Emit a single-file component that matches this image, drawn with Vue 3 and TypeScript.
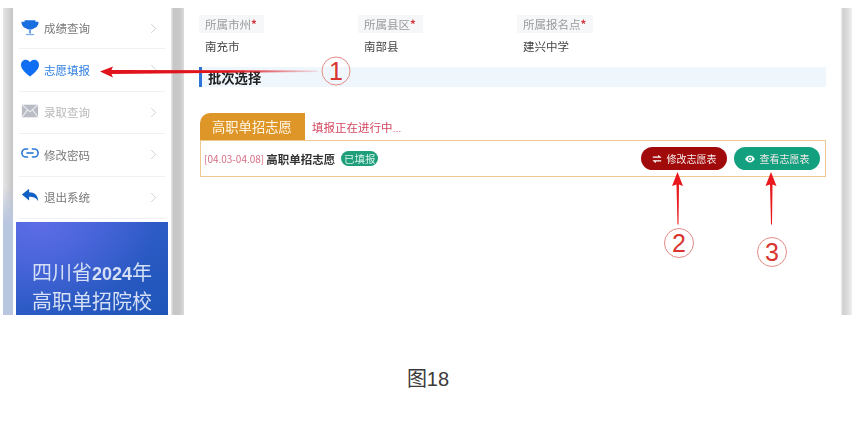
<script setup lang="ts">
interface MenuItem {
  label: string
  icon: string
  state?: string
}
const menu: MenuItem[] = [
  { label: '成绩查询', icon: 'trophy' },
  { label: '志愿填报', icon: 'heart', state: 'active' },
  { label: '录取查询', icon: 'mail', state: 'muted' },
  { label: '修改密码', icon: 'link' },
  { label: '退出系统', icon: 'reply' },
]
const fields = [
  { label: '所属市州', value: '南充市' },
  { label: '所属县区', value: '南部县' },
  { label: '所属报名点', value: '建兴中学' },
]
</script>

<template>
  <div class="page">
    <div class="shot">
      <div class="edge-left"></div>
      <aside class="sidebar">
        <ul class="menu">
          <li v-for="item in menu" :key="item.label" class="menu-item" :class="item.state">
            <svg class="menu-icon" :class="'icon-' + item.icon" viewBox="0 0 20 20" aria-hidden="true">
              <g v-if="item.icon === 'trophy'">
                <path d="M4 1.500h12v1.500h3.500c0 4-2 6.500-5 7.200-1 1-2.500 1.600-4.500 1.600s-3.500-.6-4.500-1.600C2.500 9.500.5 7 .5 3H4z" fill="#1a6fe0" />
                <path d="M9 12h2v4H9z" fill="#5a96e4" />
                <path d="M5.500 16.500h9V18h-9z" fill="#7fb0ec" />
              </g>
              <path
                v-else-if="item.icon === 'heart'"
                fill="#0f6ef2"
                d="M10 19.500C4 15 0 11 0 6.500 0 3 2.700.8 5.400.8 7.400.8 9 1.900 10 3.500 11 1.900 12.600.8 14.600.8 17.300.8 20 3 20 6.500 20 11 16 15 10 19.500z"
              />
              <g v-else-if="item.icon === 'mail'">
                <rect x="1" y="3" width="18" height="14" fill="#b9bcc4" />
                <path d="M1 3l9 8 9-8M1 17l6-8M19 17l-6-8" fill="none" stroke="#eceef1" stroke-width="1.200" />
              </g>
              <g v-else-if="item.icon === 'link'" fill="none" stroke="#2b78d8" stroke-width="1.800">
                <path d="M8 5.500H5.500a4.500 4.500 0 0 0 0 9H8" />
                <path d="M12 5.500h2.500a4.500 4.500 0 0 1 0 9H12" />
                <path d="M6 10h8" />
              </g>
              <path
                v-else
                fill="#0f5fc4"
                d="M9 3v4c6 0 10 3 10 10-2-4-5-5-10-5v4L1 9.500z"
              />
            </svg>
            <span class="menu-label">{{ item.label }}</span>
            <svg class="chevron" viewBox="0 0 8 12" aria-hidden="true">
              <path d="M1.500 1l5 5-5 5" fill="none" stroke="#c4c6ca" stroke-width="1" />
            </svg>
          </li>
        </ul>
        <div class="banner">
          <p>四川省<b>2024</b>年</p>
          <p>高职单招院校</p>
        </div>
      </aside>
      <div class="gutter"></div>
      <main class="main">
        <div class="fields">
          <div v-for="f in fields" :key="f.label" class="field">
            <div class="field-label">{{ f.label }}<i>*</i></div>
            <div class="field-value">{{ f.value }}</div>
          </div>
        </div>
        <h2 class="section-title">批次选择</h2>
        <div class="tabs">
          <span class="tab">高职单招志愿</span>
          <span class="status">填报正在进行中<em>…</em></span>
        </div>
        <div class="batch">
          <span class="date">[04.03-04.08]</span>
          <span class="name">高职单招志愿</span>
          <span class="badge">已填报</span>
          <div class="actions">
            <button class="btn btn-red" type="button">
              <svg viewBox="0 0 12 12" aria-hidden="true">
                <path d="M1 3h6.500V.8L11.500 4.600H1zM11 9H4.500v2.200L.5 7.400H11z" fill="#fff" />
              </svg>
              修改志愿表
            </button>
            <button class="btn btn-green" type="button">
              <svg viewBox="0 0 14 10" aria-hidden="true">
                <path d="M.2 5C2 1.800 4.500.2 7 .2S12 1.800 13.800 5C12 8.200 9.500 9.800 7 9.800S2 8.200.2 5z" fill="#fff" />
                <circle cx="7" cy="5" r="2.800" fill="#12a07e" />
                <circle cx="7" cy="5" r="1.500" fill="#fff" />
              </svg>
              查看志愿表
            </button>
          </div>
        </div>
      </main>
      <div class="edge-right"></div>
    </div>

    <svg class="marks" viewBox="0 0 852 426" aria-hidden="true">
      <defs>
        <linearGradient id="fade" x1="0" x2="1" y1="0" y2="0">
          <stop offset="0" stop-color="#e0141c" />
          <stop offset="0.6" stop-color="#e0141c" />
          <stop offset="1" stop-color="#e0141c" stop-opacity="0.1" />
        </linearGradient>
      </defs>
      <path d="M100 71.500l13-5 -1.500 3.500L318 70.500v1.500l-206.500 2 1.500 3.500z" fill="url(#fade)" />
      <path d="M677.500 172l5.500 14-4-1.500-.5 40h-1l-1-40-4.500 1.500z" fill="#e8181c" />
      <path d="M771 172l5.500 14-4-1.500-.5 40h-1l-1-40-4.500 1.500z" fill="#e8181c" />
      <g fill="none" stroke="#e58a85" stroke-width="1">
        <circle cx="336" cy="71" r="14" />
        <circle cx="679" cy="243" r="14.500" />
        <circle cx="772" cy="252" r="14.500" />
      </g>
      <g class="mark-digit" fill="#d8352f" text-anchor="middle">
        <text x="336" y="80">1</text>
        <text x="679" y="252">2</text>
        <text x="772" y="261">3</text>
      </g>
    </svg>

    <p class="caption">图18</p>
  </div>
</template>

<style>
html,
body {
  margin: 0;
  background: #fff;
}
</style>

<style scoped>
.page {
  position: relative;
  width: 852px;
  height: 426px;
  overflow: hidden;
  background: #fff;
  font-family: "Noto Sans CJK SC", "Liberation Sans", sans-serif;
}
.shot {
  display: flex;
  width: 849px;
  height: 307px;
  margin: 8px 0 0 3px;
  overflow: hidden;
  filter: blur(0.6px);
}
.edge-left {
  flex: 0 0 10px;
  background:
    linear-gradient(to bottom, rgba(185, 198, 224, 0) 58%, #b9c6e0 70%),
    linear-gradient(to right, #e6e6e6, #cfcfcf 70%, #c4c4c4);
}
.sidebar {
  flex: 0 0 158px;
  display: flex;
  flex-direction: column;
  background: #fff;
}
.menu {
  list-style: none;
  margin: 0;
  padding: 0;
}
.menu-item {
  display: flex;
  align-items: center;
  height: 42.500px;
  margin: 0 6px;
  padding: 0 8px 0 2px;
  box-sizing: border-box;
  border-bottom: 1px solid #f0f0f0;
  color: #777;
  font-size: 11.500px;
}
.menu-item:first-child {
  height: 41px;
}
.menu-item.active {
  color: #2b7de0;
}
.menu-item.muted {
  color: #b8b8b8;
}
.menu-icon {
  flex: none;
  width: 18px;
  height: 18px;
  margin-right: 5px;
  margin-top: -3px;
}
.menu-icon.icon-trophy {
  margin-top: -1px;
}
.menu-icon.icon-reply {
  margin-top: -5px;
}
.menu-label {
  flex: 1;
}
.chevron {
  flex: none;
  width: 7px;
  height: 11px;
}
.banner {
  flex: 1;
  margin: 3px 3px 0;
  padding-top: 37px;
  background:
    radial-gradient(ellipse at 15% 0, #5d6ce6 0, rgba(93, 108, 230, 0) 65%),
    linear-gradient(to bottom right, #3a60d2, #1e55b8);
  color: #d5dff5;
  font-family: "Liberation Sans", "Noto Sans CJK SC", sans-serif;
  font-size: 20px;
  line-height: 28px;
  text-align: center;
}
.banner p {
  margin: 0;
}
.banner b {
  font-size: 18px;
}
.gutter {
  flex: 0 0 13px;
  background: linear-gradient(to right, #e9e9e9, #c6c6c6 20%, #c9c9c9 70%, #dcdcdc);
}
.main {
  flex: 0 0 657px;
  box-sizing: border-box;
  padding: 7px 15px 0 15px;
  background: #fff;
}
.edge-right {
  flex: 0 0 11px;
  background: linear-gradient(to right, #eeeeee, #cfcfcf 20%, #dcdcdc 60%, #f0f0f0);
}
.fields {
  display: grid;
  grid-template-columns: repeat(3, 159px);
}
.field-label {
  width: fit-content;
  height: 18px;
  padding: 0 7px 0 6px;
  background: #f6f7f9;
  color: #9a9a9a;
  font-size: 11.500px;
  line-height: 18px;
}
.field-label i {
  color: #d8343c;
  font-style: normal;
  font-weight: 700;
}
.field-value {
  margin-top: 4px;
  padding-left: 6px;
  color: #444;
  font-size: 11.500px;
  line-height: 18px;
}
.section-title {
  height: 20px;
  margin: 12px 0 0;
  padding-left: 6px;
  border-left: 3px solid #2f74d8;
  background: #eff7fd;
  color: #222;
  font-size: 13.300px;
  font-weight: 700;
  line-height: 22px;
}
.tabs {
  display: flex;
  align-items: center;
  margin: 26px 0 0 1px;
}
.tab {
  width: 105px;
  height: 27px;
  box-sizing: border-box;
  padding-left: 12px;
  border-top-left-radius: 10px;
  background: #de9629;
  color: #fff6e6;
  font-size: 13.300px;
  line-height: 27px;
}
.status {
  margin-left: 7px;
  color: #d3455e;
  font-size: 11.500px;
}
.status em {
  font-family: "Liberation Sans", sans-serif;
  font-style: normal;
  font-size: 9px;
}
.batch {
  display: flex;
  align-items: center;
  height: 37px;
  box-sizing: border-box;
  margin-left: 1px;
  padding: 0 5px 0 3px;
  border: 1px solid #edc88f;
}
.date {
  color: #d66f85;
  font-size: 10px;
}
.name {
  margin-left: 2px;
  color: #333;
  font-size: 11.500px;
  font-weight: 700;
}
.badge {
  width: 37px;
  height: 15px;
  margin-left: 6px;
  border-radius: 8px;
  background: #1f9e7c;
  color: #d8f3ea;
  font-size: 10.500px;
  line-height: 15px;
  text-align: center;
}
.actions {
  display: flex;
  gap: 7px;
  margin-left: auto;
}
.btn {
  display: flex;
  align-items: center;
  justify-content: center;
  gap: 5px;
  width: 86px;
  height: 23px;
  padding: 0;
  border: 0;
  border-radius: 12px;
  color: #f5e8e8;
  font-family: inherit;
  font-size: 10px;
}
.btn svg {
  width: 10px;
  height: 10px;
}
.btn-red {
  background: #a10a0a;
}
.btn-green {
  background: #12a07e;
}
.marks {
  position: absolute;
  top: 0;
  left: 0;
  width: 852px;
  height: 426px;
  pointer-events: none;
}
.mark-digit {
  font-family: "Liberation Sans", sans-serif;
  font-size: 25px;
}
.caption {
  margin: 52px 0 0 4px;
  color: #3a3a3a;
  font-family: "Liberation Sans", "Noto Sans CJK SC", sans-serif;
  font-size: 20px;
  line-height: 24px;
  text-align: center;
}
</style>
